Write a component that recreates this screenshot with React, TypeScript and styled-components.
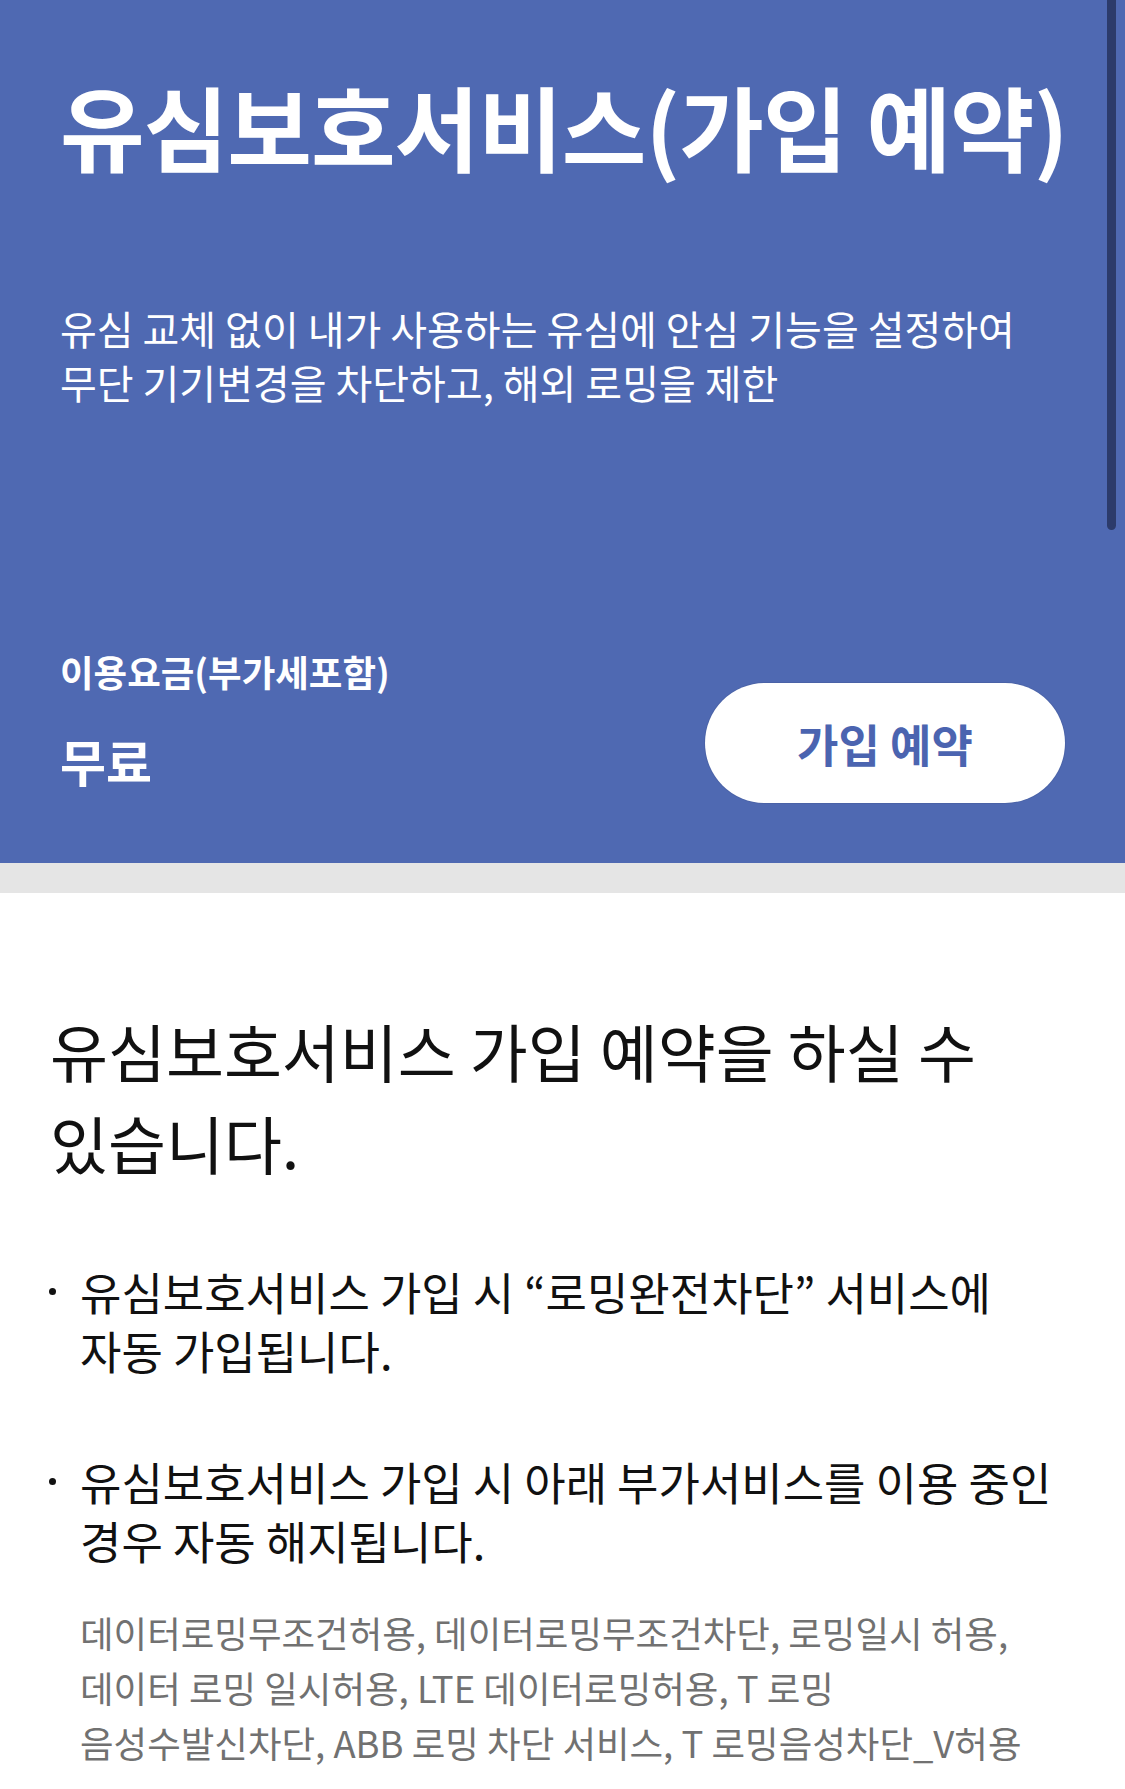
import styled, { createGlobalStyle } from "styled-components";

const GlobalStyle = createGlobalStyle`
  * {
    box-sizing: border-box;
  }
  body {
    margin: 0;
    background: #ffffff;
    font-family: "Noto Sans CJK KR", "Noto Sans", sans-serif;
    -webkit-font-smoothing: antialiased;
    word-break: keep-all;
  }
`;

const Page = styled.div`
  position: relative;
  width: 1125px;
  min-height: 1789px;
  overflow: hidden;
`;

const ScrollThumb = styled.div`
  position: absolute;
  top: 0;
  right: 9px;
  width: 9px;
  height: 530px;
  border-radius: 0 0 5px 5px;
  background: #2c3b6b;
`;

const Hero = styled.section`
  background: #4f69b2;
  color: #ffffff;
  padding: 74px 60px 60px;
`;

const Title = styled.h1`
  margin: 0;
  font-size: 92px;
  line-height: 101px;
  font-weight: 700;
  letter-spacing: -1px;
  white-space: nowrap;
`;

const Description = styled.div`
  margin-top: 126px;
  font-size: 40px;
  font-weight: 400;
`;

const DescriptionLine = styled.p`
  margin: 0;
  line-height: 54px;
`;

const PriceRow = styled.div`
  margin-top: 241px;
  display: flex;
  justify-content: space-between;
  align-items: flex-start;
`;

const Price = styled.div`
  display: flex;
  flex-direction: column;
  gap: 36px;
`;

const PriceLabel = styled.span`
  font-size: 36.5px;
  line-height: 44px;
  font-weight: 700;
`;

const PriceValue = styled.strong`
  font-size: 50px;
  line-height: 60px;
  font-weight: 700;
`;

const ReserveButton = styled.button`
  margin-top: 33px;
  width: 360px;
  height: 120px;
  border: none;
  border-radius: 60px;
  background: #ffffff;
  box-shadow: 0 0 0 1px rgba(0, 0, 0, 0.06);
  color: #4b64b0;
  font-family: inherit;
  font-size: 45px;
  font-weight: 700;
  cursor: pointer;
`;

const Divider = styled.div`
  height: 30px;
  background: #e5e5e5;
`;

const Body = styled.section`
  padding: 111px 49px 40px 50px;
`;

const Heading = styled.h2`
  margin: 0;
  font-size: 63px;
  line-height: 92px;
  font-weight: 400;
  color: #111111;
`;

const NoticeList = styled.ul`
  margin: 0;
  padding: 0;
  list-style: none;
`;

const NoticeItem = styled.li<{ $gap: number }>`
  display: flex;
  margin-top: ${(p) => p.$gap}px;
`;

const Bullet = styled.span`
  flex: 0 0 30px;
  height: 59px;
  display: flex;
  align-items: center;
  &::before {
    content: "";
    width: 7px;
    height: 7px;
    margin-left: -1px;
    border-radius: 50%;
    background: #111111;
  }
`;

const NoticeBody = styled.div`
  flex: 1;
`;

const NoticeText = styled.p`
  margin: 0;
  font-size: 45px;
  line-height: 59px;
  color: #111111;
`;

const SubText = styled.p`
  margin: 35px 0 0;
  font-size: 36.5px;
  line-height: 55px;
  color: #717171;
`;

const notices = [
  {
    gap: 74,
    text: "유심보호서비스 가입 시 “로밍완전차단” 서비스에 자동 가입됩니다.",
  },
  {
    gap: 72,
    text: "유심보호서비스 가입 시 아래 부가서비스를 이용 중인 경우 자동 해지됩니다.",
    sub: "데이터로밍무조건허용, 데이터로밍무조건차단, 로밍일시 허용, 데이터 로밍 일시허용, LTE 데이터로밍허용, T 로밍 음성수발신차단, ABB 로밍 차단 서비스, T 로밍음성차단_V허용",
  },
];

function App() {
  return (
    <Page>
      <GlobalStyle />
      <Hero>
        <Title>유심보호서비스(가입 예약)</Title>
        <Description>
          <DescriptionLine>
            유심 교체 없이 내가 사용하는 유심에 안심 기능을 설정하여
          </DescriptionLine>
          <DescriptionLine>무단 기기변경을 차단하고, 해외 로밍을 제한</DescriptionLine>
        </Description>
        <PriceRow>
          <Price>
            <PriceLabel>이용요금(부가세포함)</PriceLabel>
            <PriceValue>무료</PriceValue>
          </Price>
          <ReserveButton type="button">가입 예약</ReserveButton>
        </PriceRow>
      </Hero>
      <Divider />
      <Body>
        <Heading>유심보호서비스 가입 예약을 하실 수 있습니다.</Heading>
        <NoticeList>
          {notices.map((n) => (
            <NoticeItem key={n.text} $gap={n.gap}>
              <Bullet />
              <NoticeBody>
                <NoticeText>{n.text}</NoticeText>
                {n.sub && <SubText>{n.sub}</SubText>}
              </NoticeBody>
            </NoticeItem>
          ))}
        </NoticeList>
      </Body>
      <ScrollThumb />
    </Page>
  );
}

export default App;
